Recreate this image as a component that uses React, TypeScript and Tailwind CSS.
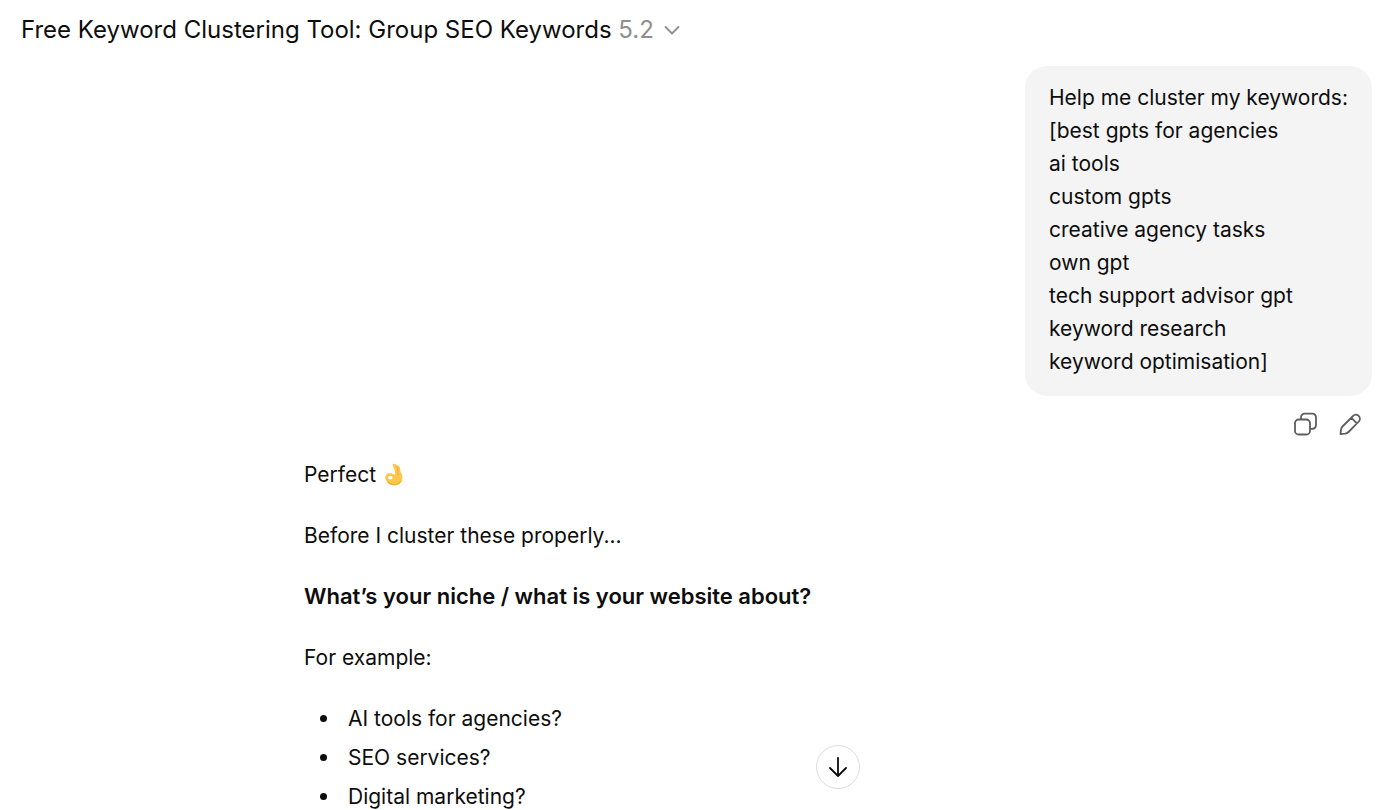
import { useState } from "react";

const prompt = [
  "Help me cluster my keywords:",
  "[best gpts for agencies",
  "ai tools",
  "custom gpts",
  "creative agency tasks",
  "own gpt",
  "tech support advisor gpt",
  "keyword research",
  "keyword optimisation]",
];

const examples = ["AI tools for agencies?", "SEO services?", "Digital marketing?"];

function OkHand() {
  return (
    <svg viewBox="0 0 20 24" className="ml-0.5 inline-block h-6 w-5 align-[-5px]" role="img" aria-label="OK hand">
      <path d="M8.600 2.200 C9 .6 11 .3 12 1.600 L12.800 2.900 C13.800 2 15.500 2.600 15.800 4.300 L16.600 9 C18.600 12 19.200 15.500 17.600 18.500 C15.500 22.600 10.500 23.500 6.500 21.800 C4.300 20.900 3.300 19.500 2.500 17.700 C.8 16.300 .6 13.300 2.200 11.600 C4 9.700 7.600 9.800 9.700 11.600 L11.300 11 C11.300 8 9.800 5.300 8.600 2.200 Z" fill="#fcc84a" />
      <path d="M12.800 3.200 C13.700 6 14.200 8.800 13.900 11.500 M3.800 19 C7 22.700 14 22.300 17.200 18.300" fill="none" stroke="#eba92f" strokeWidth="1" strokeLinecap="round" />
      <path d="M4 13.300 C5.500 12 8 12.600 9.200 13.900 C9 16.300 6.800 17.500 5 16.600 C3.500 15.900 3.200 14.300 4 13.300 Z" fill="#fff" stroke="#eba92f" strokeWidth=".6" />
    </svg>
  );
}

export default function App() {
  const [copied, setCopied] = useState(false);
  return (
    <div className="h-screen overflow-hidden bg-white font-[Inter,sans-serif] text-[21px] text-[#0d0d0d]">
      <header className="flex h-[60px] items-center px-[21px]">
        <button type="button" className="flex items-center whitespace-pre text-2xl">
          <span>Free Keyword Clustering Tool: Group SEO Keywords </span>
          <span className="text-[#8f8f8f]">5.2</span>
          <svg viewBox="0 0 16 16" className="ml-2.5 size-4" fill="none" stroke="#8f8f8f" strokeWidth="1.8" strokeLinecap="round" strokeLinejoin="round" aria-hidden="true">
            <path d="M1.500 5 L8 11.500 L14.500 5" />
          </svg>
        </button>
      </header>
      <main>
        <section className="flex flex-col items-end pt-1.5 pr-7" aria-label="Your message">
          <div className="rounded-[22px] bg-[#f4f4f4] px-6 pt-[15px] pb-[18px] leading-[33px]">
            {prompt.map((line) => (
              <p key={line}>{line}</p>
            ))}
          </div>
          <div className="flex gap-5 pt-4 pr-2.5">
            <button type="button" aria-label="Copy message" aria-pressed={copied} onClick={() => setCopied(true)}>
              <svg viewBox="0 0 24 24" className="size-6" fill="none" stroke="#5d5d5d" strokeWidth="1.8" strokeLinejoin="round" aria-hidden="true">
                <rect x="1" y="7.500" width="15" height="15" rx="3.600" />
                <path d="M7 7.500 V5.300 a3.600 3.600 0 0 1 3.600-3.600 H18.400 a3.600 3.600 0 0 1 3.600 3.600 V13.200 a3.600 3.600 0 0 1-3.600 3.600 H16" />
              </svg>
            </button>
            <button type="button" aria-label="Edit message">
              <svg viewBox="0 0 24 24" className="size-6" fill="none" stroke="#5d5d5d" strokeWidth="1.8" strokeLinejoin="round" aria-hidden="true">
                <path d="M15 4 a3.900 3.900 0 0 1 5.800 5.500 L10.500 20 Q9 21.500 7 21.700 L2.500 22 L3 17.500 Q3.200 15.800 4.500 14.500 Z M13.300 5.700 L18.800 11.300" />
              </svg>
            </button>
          </div>
        </section>
        <article className="ml-[304px] flex max-w-[800px] flex-col gap-7 pt-[22px] leading-[33px]">
          <p>Perfect <OkHand /></p>
          <p>Before I cluster these properly...</p>
          <p className="text-[22px] leading-[33px] font-semibold">What’s your niche / what is your website about?</p>
          <p>For example:</p>
          <ul className="flex flex-col gap-1.5 pl-4">
            {examples.map((item) => (
              <li key={item} className="flex items-center gap-[21px] before:size-[7px] before:rounded-full before:bg-[#0d0d0d]">
                {item}
              </li>
            ))}
          </ul>
        </article>
      </main>
      <button type="button" aria-label="Scroll to bottom" className="absolute bottom-[21px] left-[816px] flex size-11 items-center justify-center rounded-full border border-[#dedede] bg-white">
        <svg viewBox="0 0 24 24" className="size-6" fill="none" stroke="#0d0d0d" strokeWidth="1.8" strokeLinecap="round" strokeLinejoin="round" aria-hidden="true">
          <path d="M12 3 V21 M4 13 L12 21 L20 13" />
        </svg>
      </button>
    </div>
  );
}
